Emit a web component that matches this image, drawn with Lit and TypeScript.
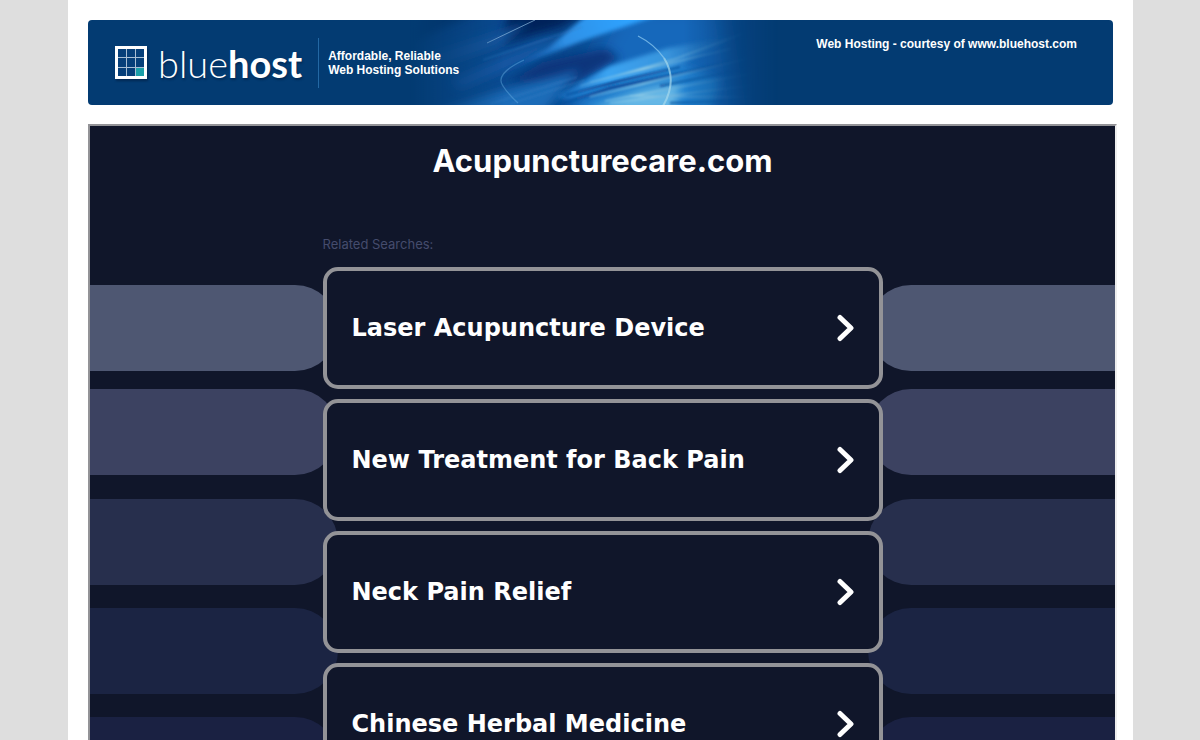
import { LitElement, html, css, svg } from "lit";
import { customElement, property } from "lit/decorators.js";

@customElement("host-banner")
export class HostBanner extends LitElement {
  static styles = css`
    :host {
      display: grid;
      grid-template-columns: minmax(0, 1fr);
      height: 85px;
      border-radius: 4px;
      overflow: hidden;
      background: #033b72;
      color: #fff;
      font: bold 12px/14px "Liberation Sans", Arial, sans-serif;
    }
    .art,
    .bar {
      grid-area: 1 / 1;
    }
    .art {
      width: 380px;
      height: 85px;
      margin-left: 322px;
    }
    .bar {
      display: flex;
      align-items: center;
      padding: 0 36px 0 26px;
      z-index: 1;
    }
    a {
      color: inherit;
      text-decoration: none;
    }
    .brand {
      display: flex;
      align-items: center;
      gap: 10px;
      font: 300 38px/48px Lato, sans-serif;
      text-shadow: 1px 2px 2px rgba(0, 20, 50, 0.4);
    }
    .brand b {
      font-weight: 700;
    }
    .mark {
      width: 34px;
      height: 36px;
      overflow: visible;
      filter: drop-shadow(1px 2px 1px rgba(0, 20, 50, 0.5));
    }
    .tagline {
      margin: 0 0 0 16px;
      height: 50px;
      padding-left: 9px;
      border-left: 1px solid #2368a4;
      display: flex;
      align-items: center;
    }
    .courtesy {
      margin-left: auto;
      align-self: flex-start;
      padding-top: 17px;
    }
  `;

  private art() {
    return svg`
      <defs>
        <linearGradient id="fade" x1="0" x2="1">
          <stop offset="0" stop-color="#000"/>
          <stop offset=".25" stop-color="#fff"/>
          <stop offset=".72" stop-color="#fff"/>
          <stop offset=".97" stop-color="#000"/>
        </linearGradient>
        <mask id="m" maskUnits="userSpaceOnUse" x="-20" y="0" width="380" height="85">
          <rect x="-20" width="380" height="85" fill="url(#fade)"/>
        </mask>
        <linearGradient id="ray" gradientUnits="userSpaceOnUse" x1="110" y1="85" x2="310" y2="20">
          <stop offset="0" stop-color="#1573cc" stop-opacity=".2"/>
          <stop offset=".35" stop-color="#3ba4f2"/>
          <stop offset=".65" stop-color="#3994dc"/>
          <stop offset="1" stop-color="#1c67ad" stop-opacity="0"/>
        </linearGradient>
        <linearGradient id="thin" gradientUnits="userSpaceOnUse" x1="120" y1="0" x2="325" y2="0">
          <stop offset="0" stop-color="#7cc4ee" stop-opacity="0"/>
          <stop offset=".45" stop-color="#8cc9e6"/>
          <stop offset="1" stop-color="#2f7fc4" stop-opacity="0"/>
        </linearGradient>
        <linearGradient id="dark" gradientUnits="userSpaceOnUse" x1="120" y1="0" x2="325" y2="0">
          <stop offset="0" stop-color="#0b4d9b" stop-opacity=".3"/>
          <stop offset=".3" stop-color="#0b4d9b"/>
          <stop offset="1" stop-color="#0b4d9b" stop-opacity="0"/>
        </linearGradient>
        <linearGradient id="beam" gradientUnits="userSpaceOnUse" x1="75" y1="52" x2="200" y2="0">
          <stop offset="0" stop-color="#1766bd" stop-opacity="0"/>
          <stop offset=".5" stop-color="#2e90e6"/>
          <stop offset="1" stop-color="#2ea3ff"/>
        </linearGradient>
        <filter id="b1" filterUnits="userSpaceOnUse" x="-60" y="-40" width="460" height="165"><feGaussianBlur stdDeviation="1"/></filter>
        <filter id="b2" filterUnits="userSpaceOnUse" x="-60" y="-40" width="460" height="165"><feGaussianBlur stdDeviation="2"/></filter>
        <filter id="b5" filterUnits="userSpaceOnUse" x="-60" y="-40" width="460" height="165"><feGaussianBlur stdDeviation="5"/></filter>
        <filter id="b12" filterUnits="userSpaceOnUse" x="-60" y="-40" width="460" height="165"><feGaussianBlur stdDeviation="12"/></filter>
      </defs>
      <g mask="url(#m)">
        <rect x="-20" width="380" height="85" fill="#0a4a90"/>
        <path d="M130 100 L190 -20 H290 L310 100Z" fill="#1668bb" filter="url(#b12)"/>
        <path d="M-10 -10 H50 L-20 24Z" fill="#032e66" filter="url(#b5)"/>
        <path d="M80 -10 H160 L130 8 L70 24Z" fill="#03245a" filter="url(#b5)"/>
        <path d="M0 34 L100 2 L70 26 L0 50Z" fill="#13579f" filter="url(#b5)"/>
        <path d="M20 60 L110 22 L140 18 L90 44 L30 70Z" fill="#1259a4" filter="url(#b5)"/>
        <path d="M78 62 L112 42 L175 28 L190 38 L140 66Z" fill="#07367b" filter="url(#b5)"/>
        <path d="M-10 96 L60 74 L150 50 L110 96Z" fill="#1c6cb8" filter="url(#b5)"/>
        <path d="M158 -6 H232 L150 22 L66 54 L118 28Z" fill="url(#beam)" filter="url(#b2)"/>
        <path d="M140 88 L245 42 L290 60 L280 95Z" fill="#2382d0" filter="url(#b5)"/>
        <path d="M125 77 L180 46 L238 28 L310 15 L240 50 L140 80Z" fill="url(#ray)" filter="url(#b2)"/>
        <path d="M155 92 L210 70 L250 62 L245 92Z" fill="#66b8e6" filter="url(#b5)"/>
        <g fill="none" filter="url(#b1)">
          <path d="M124 86 L180 68 L300 42 M136 75 L190 61 L250 47" stroke="url(#dark)" stroke-width="3"/>
          <path d="M150 66 L245 39 L312 14 M160 62 L300 29" stroke="url(#thin)" stroke-width="1.5"/>
          <path d="M160 77 L320 38 M175 81 L325 53" stroke="url(#thin)" stroke-width="1.5"/>
          <path d="M180 83 L325 65 M200 76 L325 77" stroke="url(#thin)" stroke-width="1.5"/>
          <path d="M230 66 L320 48 M240 83 L325 80" stroke="url(#dark)" stroke-width="3"/>
          <path d="M53 40 L152 7 M60 84 L147 57 M80 84 L155 60" stroke="#357fc4" stroke-width="1" opacity=".7"/>
        </g>
        <path d="M57 23 L105 0" stroke="#8db9df" stroke-width="1" opacity=".7"/>
        <path d="M208 16 Q224 24 234 38" fill="none" stroke="#82c2ec" stroke-width="1.3" opacity=".8"/>
        <path d="M234 38 Q248 60 233 86" fill="none" stroke="#a5d8ec" stroke-width="2" opacity=".7"/>
        <path d="M94 40 Q64 54 73 66 Q78 74 88 83" fill="none" stroke="#5da5dd" stroke-width="1.3" opacity=".5"/>
      </g>`;
  }

  render() {
    return html`
      <svg class="art" viewBox="-20 0 380 85" aria-hidden="true">${this.art()}</svg>
      <div class="bar">
        <a class="brand" href="#" aria-label="bluehost">
          <svg class="mark" viewBox="0 0 34 36" aria-hidden="true">
            <rect x="2.5" y="2.5" width="29" height="30" fill="#063f79" stroke="#fff" stroke-width="3" />
            <rect x="22" y="23" width="8" height="8" fill="#1b9fa8" />
            <path d="M12.5 4V31M21.5 4V31M4 12.5H30M4 22.5H30" stroke="#a9bfd4" />
          </svg>
          <span>blue<b>host</b></span>
        </a>
        <p class="tagline">Affordable, Reliable<br />Web Hosting Solutions</p>
        <a class="courtesy" href="#">Web Hosting - courtesy of www.bluehost.com</a>
      </div>
    `;
  }
}

@customElement("search-card")
export class SearchCard extends LitElement {
  @property() label = "";

  static styles = css`
    :host {
      display: block;
    }
    a {
      display: flex;
      align-items: center;
      justify-content: space-between;
      box-sizing: border-box;
      min-height: 122px;
      padding: 0 25px;
      border: 4px solid #939397;
      border-radius: 15px;
      background: #10162a;
      color: #fff;
      font: bold 24px/30px "DejaVu Sans", Verdana, sans-serif;
      text-decoration: none;
    }
    svg {
      flex: none;
      width: 17px;
      height: 28px;
    }
  `;

  render() {
    return html`<a href="#">
      <span>${this.label}</span>
      <svg viewBox="0 0 17 28" aria-hidden="true">
        <path d="M3 3.5L14 14L3 24.5" fill="none" stroke="#fff" stroke-width="5" stroke-linecap="round" stroke-linejoin="round" />
      </svg>
    </a>`;
  }
}

@customElement("app-root")
export class AppRoot extends LitElement {
  private searches = [
    "Laser Acupuncture Device",
    "New Treatment for Back Pain",
    "Neck Pain Relief",
    "Chinese Herbal Medicine",
  ];

  static styles = css`
    :host {
      display: block;
      min-height: 100vh;
      padding-left: 1px;
      background: #dedede;
    }
    .page {
      box-sizing: border-box;
      max-width: 1065px;
      min-height: 100vh;
      margin: 0 auto;
      padding: 20px;
      background: #fff;
    }
    .frame {
      display: grid;
      grid-template-columns: minmax(0, 1fr);
      margin: 19px -4px 0 0;
      border: 2px solid;
      border-color: #939397 #eeeeee #eeeeee #939397;
      background: #10162a;
    }
    .stripes,
    .content {
      grid-area: 1 / 1;
    }
    .stripes {
      padding-top: 159px;
    }
    .stripe {
      display: flex;
      justify-content: space-between;
      height: 86px;
      margin-bottom: 23px;
    }
    .stripe i {
      width: calc(50% - 265px);
      background: currentColor;
      border-radius: 0 43px 43px 0;
    }
    .stripe i + i {
      border-radius: 43px 0 0 43px;
    }
    .s1 {
      color: #4e5772;
      margin-bottom: 18px;
    }
    .s2 {
      color: #3c4261;
      margin-bottom: 24px;
    }
    .s3 {
      color: #272f4d;
    }
    .s4 {
      color: #1b2443;
    }
    .s5 {
      color: #1a2142;
    }
    .content {
      z-index: 1;
      width: 100%;
      max-width: 560px;
      margin: 0 auto;
      padding-bottom: 40px;
    }
    h1 {
      margin: 0;
      padding-top: 16px;
      color: #fff;
      font: bold 31px/38px Inter, sans-serif;
      text-align: center;
    }
    .related {
      margin: 56px 0 15px;
      color: #454c6d;
      font: 400 13px/16px Inter, sans-serif;
    }
    ul {
      display: grid;
      gap: 10px;
      margin: 0;
      padding: 0;
      list-style: none;
    }
  `;

  render() {
    return html`
      <div class="page">
        <host-banner></host-banner>
        <main class="frame">
          <div class="stripes" aria-hidden="true">
            ${[1, 2, 3, 4, 5].map((n) => html`<div class="stripe s${n}"><i></i><i></i></div>`)}
          </div>
          <div class="content">
            <h1>Acupuncturecare.com</h1>
            <p class="related">Related Searches:</p>
            <ul>
              ${this.searches.map((s) => html`<li><search-card .label=${s}></search-card></li>`)}
            </ul>
          </div>
        </main>
      </div>
    `;
  }
}
